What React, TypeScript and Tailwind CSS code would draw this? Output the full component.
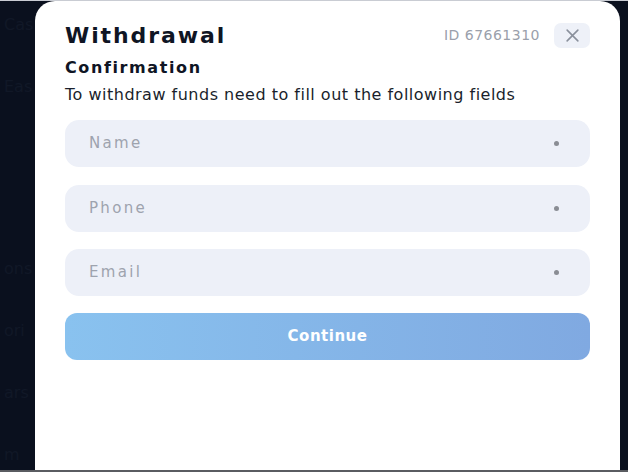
import React from 'react';

const fields = ['Name', 'Phone', 'Email'];

const BgText: React.FC = () => (
  <div className="flex flex-col gap-[38px] pt-[12px] pl-[4px] text-[16px] text-[#111827] select-none">
    <span>Cas</span>
    <span>Eas</span>
    <span className="mt-[120px]">ons</span>
    <span>ori</span>
    <span>ars</span>
    <span>m</span>
  </div>
);

const App: React.FC = () => {
  return (
    <div
      className="h-[472px] w-[628px] flex flex-col bg-[#0a101e] overflow-hidden"
      style={{ fontFamily: '"DejaVu Sans", Inter, sans-serif' }}
    >
      <div className="h-px bg-[#c9ccd3]" />
      <div className="flex-1 flex min-h-0">
        <div className="w-[35px] overflow-hidden">
          <BgText />
        </div>
        <div className="w-[585px] bg-white rounded-t-[20px] px-[30px] pt-[19px] flex flex-col">
          <div className="flex items-center justify-between h-[30px]">
            <h1 className="text-[22px] font-bold text-[#0f1524] tracking-[1.9px]">Withdrawal</h1>
            <div className="flex items-center gap-[14px]">
              <span className="text-[14px] text-[#9aa0ab] tracking-[0.5px]">ID 67661310</span>
              <button className="w-[36px] h-[25px] rounded-[7px] bg-[#eef1f8] flex items-center justify-center">
                <svg width="15" height="15" viewBox="0 0 14 14" fill="none" stroke="#8a909c" strokeWidth="1.5" strokeLinecap="round">
                  <path d="M2 2 L12 12 M12 2 L2 12" />
                </svg>
              </button>
            </div>
          </div>
          <h2 className="mt-[6px] text-[16px] leading-[24px] font-bold text-[#0f1524] tracking-[1.6px]">Confirmation</h2>
          <p className="mt-[5px] text-[16px] leading-[20px] text-[#1a1f2c] tracking-[0.5px]">
            To withdraw funds need to fill out the following fields
          </p>
          <div className="mt-[15px] flex flex-col gap-[17px]">
            {fields.map((f, i) => (
              <div
                key={f}
                className={`h-[47px] rounded-[14px] bg-[#edf0f8] flex items-center justify-between pl-[24px] pr-[31px] ${i === 0 ? 'mb-[1px]' : ''}`}
              >
                <span className="text-[15px] text-[#9ea3ae] tracking-[2.3px]">{f}</span>
                <span className="w-[5px] h-[5px] rounded-full bg-[#8a8d94]" />
              </div>
            ))}
            <button className="h-[47px] rounded-[12px] bg-gradient-to-r from-[#89c2ef] to-[#80a9e1] text-white text-[15px] font-bold tracking-[0.5px]">
              Continue
            </button>
          </div>
        </div>
        <div className="flex-1" />
      </div>
      <div className="h-[2px] bg-[#5a5c61]" />
    </div>
  );
};

export default App;
